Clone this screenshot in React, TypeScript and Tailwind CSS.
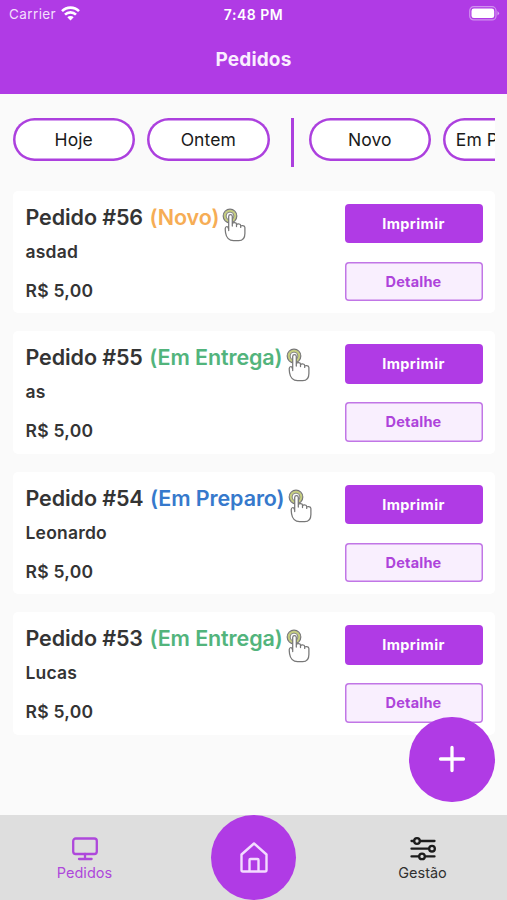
type Order = { id: number; status: string; color: string; customer: string; price: string };

const orders: Order[] = [
  { id: 56, status: "Novo", color: "text-[#f6ad55]", customer: "asdad", price: "R$ 5,00" },
  { id: 55, status: "Em Entrega", color: "text-[#52b47c]", customer: "as", price: "R$ 5,00" },
  { id: 54, status: "Em Preparo", color: "text-[#3679cc]", customer: "Leonardo", price: "R$ 5,00" },
  { id: 53, status: "Em Entrega", color: "text-[#52b47c]", customer: "Lucas", price: "R$ 5,00" },
];

function TapIcon() {
  return (
    <svg className="ml-[3px] shrink-0" width="26" height="34" viewBox="0 0 26 34" fill="none">
      <circle cx="8" cy="8" r="5.200" stroke="#c6ce80" strokeWidth="2.600" />
      <circle cx="8" cy="8" r="6.800" stroke="#777" strokeWidth="1.200" />
      <circle cx="8" cy="8" r="3.900" stroke="#777" strokeWidth=".9" />
      <path
        d="M6.700 22.500V8.500a1.800 1.800 0 0 1 3.600 0V18v-2.200c0-1.700 4.200-1.700 4.200.2v2.500v-1.500c0-1.700 4.200-1.500 4.200.4v2v-.8c0-1.600 4.200-1.400 4.200.8v6c0 4.500-2 7.200-6.200 7.200h-5.200c-4.200 0-7.300-3.200-7.900-7.700-.3-2.500-1.100-6.300 1.300-6.400 1 0 1.300.8 1.500 1.800"
        fill="#fff"
        stroke="#777"
        strokeWidth="1.250"
        strokeLinejoin="round"
        strokeLinecap="round"
      />
    </svg>
  );
}

function OrderCard({ order }: { order: Order }) {
  return (
    <article className="flex h-[122.5px] justify-between rounded-[5px] bg-white pl-[13px] pr-3">
      <div className="flex flex-col whitespace-nowrap font-semibold text-[#343434]">
        <div className="flex h-[46px] items-start text-[21.5px] leading-[26px] tracking-[-0.1px]">
          <h2 className="mt-[13px]">Pedido #{order.id}</h2>
          <span className={`ml-[6.5px] mt-[13px] ${order.color}`}>({order.status})</span>
          <div className="pt-[17px]">
            <TapIcon />
          </div>
        </div>
        <p className="mt-[3px] text-[17.5px] leading-6 tracking-[0.2px]">{order.customer}</p>
        <p className="mt-[15px] text-[17.5px] leading-6 tracking-[0.25px]">{order.price}</p>
      </div>
      <div className="flex w-[138px] shrink-0 flex-col gap-[18.500px] pt-[13px]">
        <button className="h-[39.500px] rounded-[4px] bg-[#b03be5] text-[14.5px] font-bold tracking-[0.4px] text-white">Imprimir</button>
        <button className="h-[39.500px] rounded-[4px] bg-[#f9effe] text-[14.5px] font-bold tracking-[0.2px] text-[#ae43db] shadow-[inset_0_0_0_1.5px_#c176e6]">
          Detalhe
        </button>
      </div>
    </article>
  );
}

function Pill({ label }: { label: string }) {
  return (
    <button className="h-[43px] w-[122.500px] shrink-0 whitespace-nowrap rounded-full bg-white px-[12.500px] pt-px text-[17.500px] tracking-[0.08px] text-[#1a1a1a] shadow-[inset_0_0_0_2.5px_#ac40de]">
      {label}
    </button>
  );
}

export default function App() {
  return (
    <div className="relative flex h-[900px] w-[507px] flex-col overflow-hidden bg-[#fafafa] font-['Inter','Liberation_Sans',sans-serif]">
      <header className="h-[94px] shrink-0 bg-[#b03be5] text-white">
        <div className="grid h-7 grid-cols-3 items-center px-[9px] text-[13.5px]">
          <div className="flex items-center gap-[5px] text-[#f3dffc]">
            <span className="tracking-[0.4px]">Carrier</span>
            <svg className="-mt-0.5" width="19" height="15" viewBox="0 0 19 15" fill="none" stroke="white" strokeWidth="2.600">
              <path d="M1 5.200a12 12 0 0 1 17 0M4 8.600a7.800 7.800 0 0 1 11 0" />
              <path d="M6.300 11.300a4.500 4.500 0 0 1 6.400 0l-3.200 3.200z" fill="white" stroke="none" />
            </svg>
          </div>
          <time className="text-center text-[14px] font-semibold tracking-[0.5px]">7:48 PM</time>
          <svg className="-mr-0.5 -mt-0.5 justify-self-end" width="31" height="15" viewBox="0 0 31 15">
            <rect x=".7" y=".7" width="26.300" height="13.200" rx="4" fill="none" stroke="#d091ef" strokeWidth="1.200" />
            <rect x="2.500" y="2.500" width="22.700" height="9.600" rx="2.400" fill="white" />
            <path d="M28.500 5v4.500q3-2.250 0-4.500" fill="#d9a7f2" />
          </svg>
        </div>
        <h1 className="mt-[18px] text-center text-[19px] font-bold leading-7 tracking-[0.15px] text-[#faedff]">Pedidos</h1>
      </header>

      <main className="flex min-h-0 flex-1 flex-col px-[12.500px]">
        <nav className="mt-6 flex h-[72.8px] shrink-0 items-start overflow-hidden">
          <Pill label="Hoje" />
          <div className="w-3 shrink-0" />
          <Pill label="Ontem" />
          <div className="ml-[21.500px] mr-[14.500px] h-[49px] w-[3px] shrink-0 bg-[#ac40de]" />
          <Pill label="Novo" />
          <div className="w-3 shrink-0" />
          <Pill label="Em Preparo" />
        </nav>
        <section className="flex flex-col gap-[18px]">
          {orders.map((order) => (
            <OrderCard key={order.id} order={order} />
          ))}
        </section>
      </main>

      <footer className="grid h-[85.500px] shrink-0 grid-cols-3 bg-[#dedede] text-[14.5px]">
        <div className="flex flex-col items-center pt-[21px] text-[#ae48db]">
          <svg width="28" height="26" viewBox="0 0 28 26" fill="none" stroke="currentColor" strokeWidth="2.300" strokeLinecap="round">
            <rect x="2.200" y="2.500" width="23.600" height="15.500" rx="2.500" />
            <path d="M14 18v5M8 23h12.600" />
          </svg>
          <span className="mt-px leading-5">Pedidos</span>
        </div>
        <div className="flex justify-center">
          <button aria-label="Início" className="flex size-[85.500px] items-center justify-center rounded-full bg-[#b03be5]">
            <svg width="30" height="32" viewBox="0 0 30 32" fill="none" stroke="#f3dcff" strokeWidth="2.400" strokeLinejoin="round">
              <path d="M2.500 13.500 15 2.500l12.500 11V29a1.500 1.500 0 0 1-1.500 1.500H4A1.500 1.500 0 0 1 2.500 29z" />
              <path d="M10.500 30.500V19a1 1 0 0 1 1-1h7a1 1 0 0 1 1 1v11.500" />
            </svg>
          </button>
        </div>
        <div className="flex flex-col items-center pt-[21px] text-[#303030]">
          <svg width="28" height="26" viewBox="0 0 28 26" fill="none" stroke="#1c1c1c" strokeWidth="2.300" strokeLinecap="round">
            <path d="M2.500 5h23M2.500 12.700h23M2.500 20.400h23" />
            <g fill="#dedede">
              <circle cx="8" cy="5" r="2.800" />
              <circle cx="23" cy="12.700" r="2.800" />
              <circle cx="13" cy="20.400" r="2.800" />
            </g>
          </svg>
          <span className="mt-px leading-5">Gestão</span>
        </div>
      </footer>

      <button aria-label="Novo pedido" className="absolute bottom-[98px] right-[12.500px] flex size-[85.500px] items-center justify-center rounded-full bg-[#b03be5]">
        <svg width="28" height="28" viewBox="0 0 28 28" stroke="white" strokeWidth="3.300" strokeLinecap="round">
          <path d="M14 2.500v23M2.500 14h23" />
        </svg>
      </button>
    </div>
  );
}
